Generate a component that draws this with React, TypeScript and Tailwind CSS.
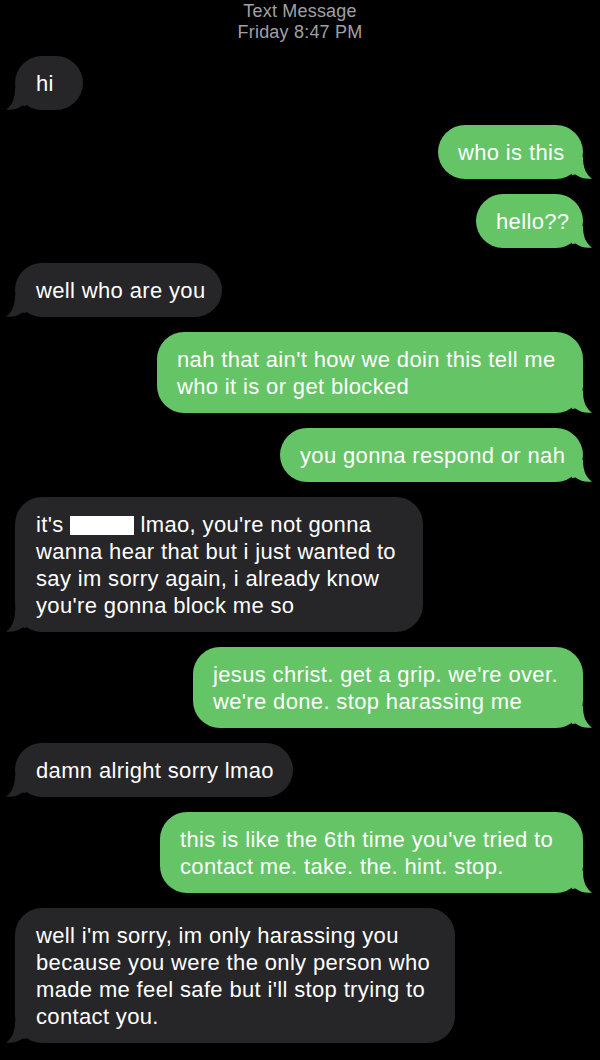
const GREEN = "#65c466";
const GRAY = "#262628";

type Msg = {
  me: boolean;
  w: string;
  lines: React.ReactNode[];
};

const MESSAGES: Msg[] = [
  { me: false, w: "w-[68px]", lines: ["hi"] },
  { me: true, w: "w-[145px]", lines: ["who is this"] },
  { me: true, w: "w-[107px]", lines: ["hello??"] },
  { me: false, w: "w-[207px]", lines: ["well who are you"] },
  {
    me: true,
    w: "w-[426px]",
    lines: ["nah that ain't how we doin this tell me", "who it is or get blocked"],
  },
  { me: true, w: "w-[303px]", lines: ["you gonna respond or nah"] },
  {
    me: false,
    w: "w-[408px]",
    lines: [
      <>
        it's <span className="inline-block h-[19px] w-[64px] bg-white align-[-3px]" /> lmao, you're not gonna
      </>,
      "wanna hear that but i just wanted to",
      "say im sorry again, i already know",
      "you're gonna block me so",
    ],
  },
  {
    me: true,
    w: "w-[390px]",
    lines: ["jesus christ. get a grip. we're over.", "we're done. stop harassing me"],
  },
  { me: false, w: "w-[278px]", lines: ["damn alright sorry lmao"] },
  {
    me: true,
    w: "w-[423px]",
    lines: ["this is like the 6th time you've tried to", "contact me. take. the. hint. stop."],
  },
  {
    me: false,
    w: "w-[440px]",
    lines: [
      "well i'm sorry, im only harassing you",
      "because you were the only person who",
      "made me feel safe but i'll stop trying to",
      "contact you.",
    ],
  },
];

function Tail({ me }: { me: boolean }) {
  return (
    <svg
      width="20"
      height="22"
      viewBox="0 0 20 22"
      className={me ? "absolute bottom-0 -right-[9px]" : "absolute bottom-0 -left-[9px] -scale-x-100"}
    >
      <path d="M0 0H11C11 11 14 17.5 20 21.5C14 22.3 8 21 3.5 17.5L0 18Z" fill={me ? GREEN : GRAY} />
    </svg>
  );
}

function Bubble({ msg }: { msg: Msg }) {
  return (
    <div className={msg.me ? "flex justify-end pr-[17px]" : "flex justify-start pl-[15px]"}>
      <div
        className={`relative rounded-[27px] py-[13.5px] text-[22px] leading-[27px] tracking-[0.35px] text-white ${msg.w} ${
          msg.me ? "bg-[#65c466] pl-[20px]" : "bg-[#262628] pl-[21px]"
        }`}
      >
        {msg.lines.map((line, i) => (
          <div key={i} className="whitespace-nowrap">
            {line}
          </div>
        ))}
        <Tail me={msg.me} />
      </div>
    </div>
  );
}

export default function App() {
  return (
    <div className="min-h-[1060px] w-full overflow-hidden bg-black font-['Liberation_Sans',Arial,sans-serif]">
      <div className="pt-[1px] text-center text-[18px] leading-[21px] tracking-[0.2px] text-[#a0a0a4]">
        <div>Text Message</div>
        <div>Friday 8:47 PM</div>
      </div>
      <div className="mt-[13px] flex flex-col gap-[15px]">
        {MESSAGES.map((m, i) => (
          <Bubble key={i} msg={m} />
        ))}
      </div>
    </div>
  );
}
